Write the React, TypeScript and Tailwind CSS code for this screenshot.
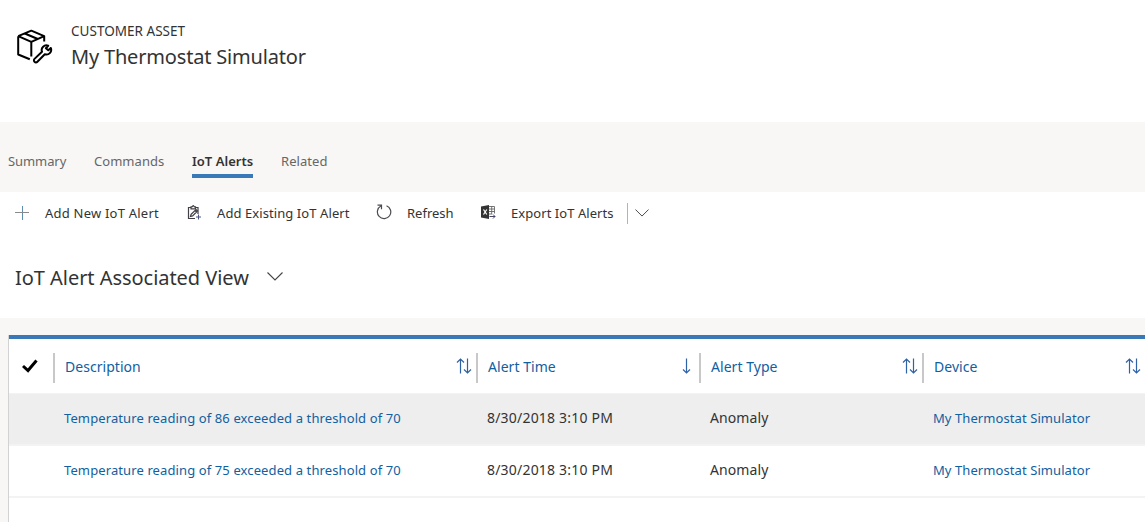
import React from "react";

const tabs = [
  { label: "Summary", box: "w-[58px] text-[13px] tracking-[-0.08px]" },
  { label: "Commands", box: "w-[70px] text-[13px] tracking-[0.04px]" },
  { label: "IoT Alerts", box: "w-[61px] text-[13px] tracking-[0.02px]", active: true },
  { label: "Related", box: "w-[47px] text-[13px] tracking-[0.05px]" },
];

const rows = [
  { reading: 86, selected: true },
  { reading: 75, selected: false },
];

function AssetIcon() {
  return (
    <svg width="37" height="37" viewBox="0 0 37 37" fill="none" stroke="#000" strokeWidth="2" strokeLinejoin="round">
      <path d="M2.200 8.200 15.300 2.700 28.200 8.200V13.500M2.200 8.200V26.500L13.800 31.200M2.200 8.200 15.300 13.800 28.200 8.200M15.300 13.800V28.500M8.800 5.500 21.800 11" />
      <path d="M32.200 17.700a4.700 4.700 0 0 0-6.200 6L18.500 30.900a2 2 0 0 0 2.900 2.900L28.800 26.200a4.700 4.700 0 0 0 6-6.200L32.300 22.300 29.900 20.200Z" strokeWidth="2" />
    </svg>
  );
}

function PlusIcon() {
  return (
    <svg width="14" height="14" viewBox="0 0 14 14" strokeWidth="1">
      <path d="M7.500 0v14" stroke="#5c8fae" />
      <path d="M0 6.500h14" stroke="#8a8a8a" />
    </svg>
  );
}

function ClipboardIcon() {
  return (
    <svg width="14" height="15" viewBox="0 0 14 15" fill="none" stroke="#444047" strokeWidth="1.200">
      <path d="M8 13.500H1.500v-11h9.500V9" />
      <path d="M4 3.800V1.800h1L6.300.6l1.200 1.200h1v2Z" fill="#fff" />
      <path d="m3.500 11.500.600-2.200 4.900-4.800 1.500 1.500-4.900 4.900ZM8 5.500 9.500 7" />
      <path d="M11.500 9.500v5M9 12h5" stroke="#4a5580" strokeWidth="1" />
    </svg>
  );
}

function RefreshIcon() {
  return (
    <svg width="16" height="16" viewBox="0 0 16 16" fill="none" stroke="#4b4b55" strokeWidth="1.200">
      <path d="M10.500 1.700A6.700 6.700 0 1 1 4.800 2.100M1.500 1.200H5.500V5.200" />
    </svg>
  );
}

function ExcelIcon() {
  return (
    <svg width="15" height="14" viewBox="0 0 15 14" fill="none">
      <path d="M8 1.500h5.500v7M8 4h5.500M8 6.500h5.500M8 9h3M10.700 1.500V9" stroke="#666" strokeWidth=".9" />
      <path d="M8.500 11.500H14M12 9.500l2 2-2 2" stroke="#446" />
      <path d="M0 1.500 8 0v14l-8-1.500Z" fill="#333" />
      <path d="m2.500 4.500 3.300 5M5.800 4.500l-3.300 5" stroke="#fff" strokeWidth="1.200" />
    </svg>
  );
}

function Chevron({ className }: { className: string }) {
  return (
    <svg className={className} viewBox="0 0 16 9" fill="none" stroke="#444" strokeWidth="1.100">
      <path d="m.5.5 7.500 7.500L15.500.5" />
    </svg>
  );
}

function SortIcon({ both }: { both: boolean }) {
  return (
    <svg className="mb-[4px]" width="16" height="16" viewBox="0 0 16 16" fill="none" stroke="#2f62a5" strokeWidth="1.200">
      {both ? (
        <path d="M4.500 15.500V1M1 4.500 4.500 1 8 4.500M11.500.5V15M8 11.500l3.500 3.500 3.500-3.500" />
      ) : (
        <path d="M7.500.5V15M4 11.500l3.500 3.500 3.500-3.500" />
      )}
    </svg>
  );
}

function HeaderCell({ label, both = true, width }: { label: string; both?: boolean; width: string }) {
  return (
    <div className={`${width} flex h-[30px] shrink-0 items-center justify-between border-l-2 border-[#c8c8c8] pr-[4px] pl-[10px]`}>
      <span className="pb-[3px] text-[14px] tracking-[0.04px] whitespace-nowrap text-[#1160a0]">{label}</span>
      <SortIcon both={both} />
    </div>
  );
}

export default function App() {
  return (
    <div className="flex h-[522px] w-[1145px] flex-col overflow-hidden bg-white font-['Noto_Sans','Open_Sans',sans-serif] text-[#333]">
      <header className="flex h-[122px] shrink-0 items-start pt-[22px] pl-[16px]">
        <div className="mt-[6px] w-[55px]">
          <AssetIcon />
        </div>
        <div>
          <div className="h-[18px] text-[13.5px] leading-[18px] tracking-[0.03px] whitespace-nowrap">CUSTOMER ASSET</div>
          <h1 className="mt-[2px] h-[30px] text-[20px] leading-[30px] tracking-[-0.18px] whitespace-nowrap">My Thermostat Simulator</h1>
        </div>
      </header>

      <nav className="flex h-[70px] shrink-0 gap-[28px] bg-[#f8f7f6] pt-[29px] pl-[8px]">
        {tabs.map((t) => (
          <div
            key={t.label}
            className={`${t.box} h-[27px] leading-[20px] whitespace-nowrap ${t.active ? "border-b-4 border-[#3a79b7] font-semibold text-[#333]" : "text-[#666]"}`}
          >
            {t.label}
          </div>
        ))}
      </nav>

      <div className="flex h-[42px] shrink-0 items-center pl-[15px] text-[13px] whitespace-nowrap">
        <div className="w-[30px] pb-[1px]"><PlusIcon /></div>
        <span className="w-[143px] pt-[2px] tracking-[0.22px]">Add New IoT Alert</span>
        <div className="mr-px -ml-px w-[29px] pb-[2px]"><ClipboardIcon /></div>
        <span className="w-[159px] pt-[2px] tracking-[0.08px]">Add Existing IoT Alert</span>
        <div className="w-[31px] pb-[2px]"><RefreshIcon /></div>
        <span className="w-[74px] pt-[2px]">Refresh</span>
        <div className="w-[30px] pb-[2px]"><ExcelIcon /></div>
        <span className="w-[116px] pt-[2px] tracking-[0.06px]">Export IoT Alerts</span>
        <div className="h-[21px] w-[8px] border-l border-[#b3b3b3]" />
        <Chevron className="h-[8px] w-[14px]" />
      </div>

      <div className="flex h-[84px] shrink-0 items-start pt-[29px] pl-[15px]">
        <h2 className="w-[252px] text-[20px] leading-[30px] tracking-[-0.04px] whitespace-nowrap">IoT Alert Associated View</h2>
        <Chevron className="mt-[9px] h-[9px] w-[16px]" />
      </div>

      <main className="flex-1 bg-[#f8f7f6] pt-[17px] pl-[8px]">
        <div className="h-full border-l border-[#d2d2d2] bg-white">
          <div className="h-[4px] bg-[#3a79b7]" />
          <div className="flex h-[55px] items-center border-b border-[#f3f3f3] pt-[4px]">
            <div className="w-[44px] shrink-0 pb-[4px] pl-[13px]">
              <svg width="16" height="14" viewBox="0 0 16 14" fill="none" stroke="#000" strokeWidth="3">
                <path d="m1 7 5 4.500L14.500 1.500" />
              </svg>
            </div>
            <HeaderCell label="Description" width="w-[423px]" />
            <HeaderCell label="Alert Time" both={false} width="w-[223px]" />
            <HeaderCell label="Alert Type" width="w-[223px]" />
            <HeaderCell label="Device" width="w-[223px]" />
          </div>
          {rows.map((r) => (
            <div
              key={r.reading}
              className={`flex h-[52px] items-center border-b-2 border-[#f3f3f3] pl-[55px] text-[14px] whitespace-nowrap ${r.selected ? "bg-[#eee]" : "bg-white"}`}
            >
              <span className="w-[423px] shrink-0 text-[13px] tracking-[0.11px] text-[#1160a0]">Temperature reading of {r.reading} exceeded a threshold of 70</span>
              <span className="w-[223px] shrink-0 pb-[3px] tracking-[0.2px]">8/30/2018 3:10 PM</span>
              <span className="w-[223px] shrink-0 pb-[3px] tracking-[0.1px]">Anomaly</span>
              <span className="text-[13px] tracking-[0.08px] text-[#1160a0]">My Thermostat Simulator</span>
            </div>
          ))}
        </div>
      </main>
    </div>
  );
}
